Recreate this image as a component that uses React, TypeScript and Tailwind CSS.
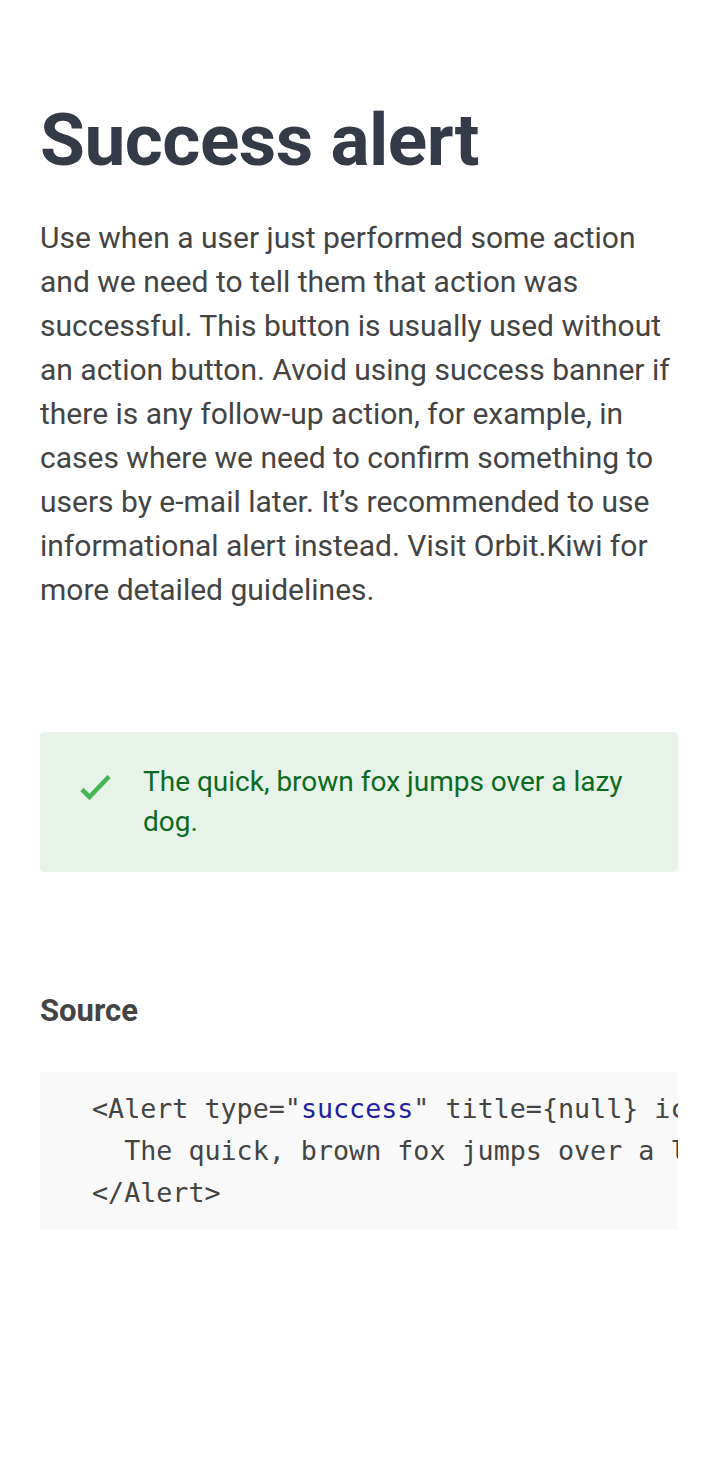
const codeFont = { fontFamily: '"DejaVu Sans Mono", monospace' };

function CheckIcon() {
	return (
		<svg width="34" height="30" viewBox="0 0 34 30" fill="none">
			<path
				d="M3 16.5 L10.5 24 L30 3.5"
				stroke="#46b655"
				strokeWidth="4.6"
				strokeLinecap="butt"
				strokeLinejoin="miter"
			/>
		</svg>
	);
}

export default function App() {
	return (
		<div
			className="bg-white min-h-[1471px] px-[40px] pt-[96px] text-[#444]"
			style={{ fontFamily: "Roboto, sans-serif" }}
		>
			<h1 className="text-[73px] leading-[88px] font-bold text-[#343a46] tracking-[-0.5px]">
				Success alert
			</h1>

			<p className="mt-[32px] text-[30px] leading-[44px] text-[#444]">
				Use when a user just performed some action and we need to tell them that
				action was successful. This button is usually used without an action
				button. Avoid using success banner if there is any follow-up action, for
				example, in cases where we need to confirm something to users by e-mail
				later. It’s recommended to use informational alert instead. Visit
				Orbit.Kiwi for more detailed guidelines.
			</p>

			<div className="mt-[120px] flex gap-[30px] rounded-[4px] bg-[#e7f3e8] pl-[39px] pr-[40px] py-[30px]">
				<div className="pt-[11px]">
					<CheckIcon />
				</div>
				<div className="text-[28px] leading-[40px] text-[#0b6b22]">
					The quick, brown fox jumps over a lazy dog.
				</div>
			</div>

			<h2 className="mt-[121px] text-[31px] font-bold leading-[36px] text-[#444]">
				Source
			</h2>

			<div
				className="mt-[43px] overflow-hidden bg-[#f9f9f9] pl-[52px] py-[16px] text-[26.7px] leading-[42px] text-[#444] whitespace-pre"
				style={codeFont}
			>
				{"<Alert type=\""}
				<span className="text-[#1f1fa3]">success</span>
				{"\" title={null} icon={<Check />}>\n  The quick, brown fox jumps over a lazy dog.\n</Alert>"}
			</div>
		</div>
	);
}
